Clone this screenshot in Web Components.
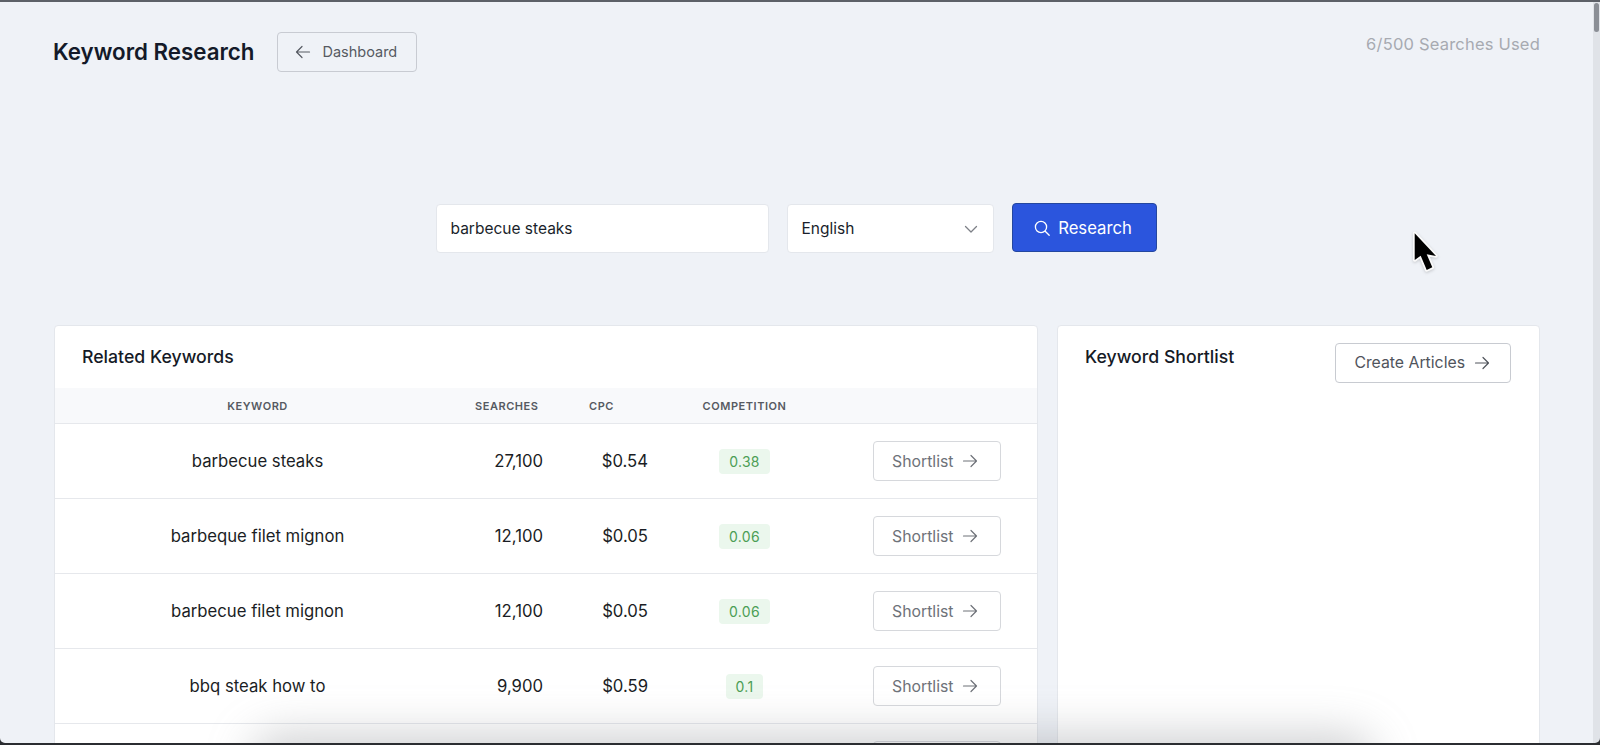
<!DOCTYPE html>
<html lang="en">
<head>
<meta charset="utf-8">
<title>Keyword Research</title>
<style>
  html, body { margin: 0; padding: 0; height: 745px; overflow: hidden; background: #eff2f7; }
  body { font-family: Inter, "Liberation Sans", sans-serif; }
</style>
</head>
<body>
<keyword-app></keyword-app>

<script>
const ARROW_RIGHT = `<svg viewBox="0 0 16 16" width="16" height="16" fill="none" stroke="currentColor" stroke-width="1.2" stroke-linecap="round" stroke-linejoin="round"><path d="M1.5 8h13M9 2.5 14.5 8 9 13.5"/></svg>`;
const ARROW_LEFT = `<svg viewBox="0 0 16 16" width="16" height="16" fill="none" stroke="currentColor" stroke-width="1.2" stroke-linecap="round" stroke-linejoin="round"><path d="M14.5 8h-13M7 2.5 1.5 8 7 13.5"/></svg>`;

/**
 * <outline-button> bordered button, icon goes before or after the label
 */
class OutlineButton extends HTMLElement {
  constructor() {
    super();
    this.attachShadow({ mode: 'open' });
  }

  connectedCallback() {
    const back = this.hasAttribute('back');
    this.shadowRoot.innerHTML = `
      <style>
        :host {
          display: inline-flex;
          align-items: center;
          box-sizing: border-box;
          height: var(--btn-h, 40px);
          width: var(--btn-w, auto);
          padding: 0 var(--btn-pad-r, 18px) 0 var(--btn-pad, 18px);
          gap: var(--btn-gap, 8px);
          border: 1px solid var(--btn-border, #d6d8dc);
          border-radius: 4px;
          background: var(--btn-bg, #fff);
          color: var(--btn-color, #6e7279);
          font-size: var(--btn-size, 15.8px);
          font-weight: 400;
          white-space: nowrap;
        }
        svg { display: block; flex: none; }
      </style>
      ${back ? ARROW_LEFT : ''}<slot></slot>${back ? '' : ARROW_RIGHT}
    `;
  }
}

/**
 * <page-header> title on the left, usage counter on the right
 */
class PageHeader extends HTMLElement {
  constructor() {
    super();
    this.attachShadow({ mode: 'open' });
    this.shadowRoot.innerHTML = `
      <style>
        :host { display: flex; justify-content: space-between; align-items: flex-start; }
        .left { display: flex; align-items: center; gap: 23px; margin-left: -1px; }
        h1 { margin: 0; font-size: 22.3px; font-weight: 600; color: #141a29; }
        outline-button {
          --btn-h: 40px; --btn-pad: 17px; --btn-pad-r: 19px; --btn-gap: 11px; --btn-bg: #eff2f7;
          --btn-border: #c8cbd2; --btn-color: #565a62; --btn-size: 14.5px;
        }
        .used { margin-top: 2px; font-size: 16.5px; line-height: 20px; color: #a7aab1; letter-spacing: .2px; }
      </style>
      <div class="left">
        <h1>Keyword Research</h1>
        <outline-button back>Dashboard</outline-button>
      </div>
      <div class="used">6/500 Searches Used</div>
    `;
  }
}

/**
 * <search-bar> keyword input, language select and submit button
 */
class SearchBar extends HTMLElement {
  constructor() {
    super();
    this.attachShadow({ mode: 'open' });
    this.shadowRoot.innerHTML = `
      <style>
        :host { display: flex; justify-content: center; align-items: center; gap: 18px; padding-right: 2px; }
        .field {
          display: flex; align-items: center; justify-content: space-between;
          box-sizing: border-box; height: 49px; margin-top: 2px; padding: 0 15px 0 14px;
          background: #fff; border: 1px solid #e4e7ec; border-radius: 4px;
          font-size: 15.5px; color: #1a1f2b;
        }
        .input { width: 333px; }
        .select { width: 207px; }
        .select svg { color: #7d8087; }
        .go {
          display: flex; align-items: center; justify-content: center; gap: 7px;
          box-sizing: border-box; width: 145px; height: 49px; padding-right: 3px;
          background: #2b55dd; border: 1px solid #24479f; border-radius: 4px;
          color: #fff; font-size: 16.7px;
        }
        svg { display: block; }
      </style>
      <div class="field input">barbecue steaks</div>
      <div class="field select">English
        <svg viewBox="0 0 14 14" width="14" height="14" fill="none" stroke="currentColor" stroke-width="1.3" stroke-linecap="round" stroke-linejoin="round"><path d="M1.5 4.5 7 10l5.5-5.5"/></svg>
      </div>
      <div class="go">
        <svg viewBox="0 0 18 18" width="18" height="18" fill="none" stroke="currentColor" stroke-width="1.3" stroke-linecap="round"><circle cx="8" cy="8" r="5.6"/><path d="m12.2 12.2 4 4"/></svg>
        Research
      </div>
    `;
  }
}

/**
 * <score-badge> pale green chip with the competition value
 */
class ScoreBadge extends HTMLElement {
  constructor() {
    super();
    this.attachShadow({ mode: 'open' });
    this.shadowRoot.innerHTML = `
      <style>
        :host {
          display: inline-flex; align-items: center; box-sizing: border-box;
          height: 25px; padding: 0 10px; border-radius: 4px;
          background: #ebf7ed; color: #4c9e55; font-size: 14px; letter-spacing: .3px;
        }
      </style>
      <slot></slot>
    `;
  }
}

/**
 * <keyword-row> one table row
 * @attr {string} keyword, searches, cpc, score
 * @attr {boolean} cut - last row, only the top of its button is in view
 */
class KeywordRow extends HTMLElement {
  constructor() {
    super();
    this.attachShadow({ mode: 'open' });
  }

  connectedCallback() {
    const a = (n) => this.getAttribute(n) || '';
    const score = a('score');
    const cut = this.hasAttribute('cut');
    this.shadowRoot.innerHTML = `
      <style>
        :host {
          display: grid;
          grid-template-columns: var(--kw-cols);
          align-items: center;
          box-sizing: border-box;
          height: 75px;
          border-bottom: 1px solid #e6e8ec;
          font-size: 16.7px;
          color: #1a1d24;
        }
        .kw { text-align: center; }
        .num { text-align: right; padding-right: 14px; }
        .score { text-align: center; }
        .act { display: flex; justify-content: flex-end; padding-right: 36px; }
        outline-button { --btn-w: 128px; --btn-pad: 18px; --btn-pad-r: 21px; --btn-gap: 9px; }
      </style>
      <div class="kw">${a('keyword')}</div>
      <div class="num">${a('searches')}</div>
      <div class="num">${a('cpc')}</div>
      <div class="score">${score ? `<score-badge>${score}</score-badge>` : ''}</div>
      <div class="act"><outline-button>${cut ? '' : 'Shortlist'}</outline-button></div>
    `;
  }
}

/**
 * <keyword-table> header strip plus the rows passed in as children
 */
class KeywordTable extends HTMLElement {
  constructor() {
    super();
    this.attachShadow({ mode: 'open' });
    this.shadowRoot.innerHTML = `
      <style>
        :host { display: block; --kw-cols: 405px 97px 105px 165px 1fr; }
        .head {
          display: grid;
          grid-template-columns: var(--kw-cols);
          align-items: center;
          box-sizing: border-box;
          height: 36px;
          background: #f8f9fb;
          border-bottom: 1px solid #e6e8ec;
          font-size: 11px;
          font-weight: 600;
          letter-spacing: .55px;
          color: #565a62;
        }
        .c { text-align: center; }
        .l { padding-left: 15px; }
        .p { padding-left: 32px; }
      </style>
      <div class="head">
        <div class="c">KEYWORD</div>
        <div class="l">SEARCHES</div>
        <div class="p">CPC</div>
        <div class="c">COMPETITION</div>
        <div></div>
      </div>
      <slot></slot>
    `;
  }
}

/**
 * <panel-card> white card with a title row, extra header content goes in slot="action"
 */
class PanelCard extends HTMLElement {
  constructor() {
    super();
    this.attachShadow({ mode: 'open' });
    this.shadowRoot.innerHTML = `
      <style>
        :host {
          display: block; box-sizing: border-box; height: 600px; overflow: hidden;
          background: #fff; border: 1px solid #e4e7ec; border-radius: 4px 4px 0 0;
        }
        .top { display: flex; justify-content: space-between; align-items: flex-start; height: 62px; padding: 16.5px 28px 0 27px; box-sizing: border-box; }
        h2 { margin: 2px 0 0; font-size: 17.7px; line-height: 24px; font-weight: 500; color: #151a26; }
        ::slotted([slot="action"]) { --btn-h: 40px; --btn-pad: 18px; --btn-pad-r: 20px; --btn-gap: 9px; --btn-border: #c8cbd1; --btn-color: #50545c; }
      </style>
      <div class="top">
        <h2>${this.getAttribute('heading') || ''}</h2>
        <slot name="action"></slot>
      </div>
      <slot></slot>
    `;
  }
}

/**
 * <keyword-app> page shell, also holds what the capture laid over the page
 * (scrollbar, pointer, blurred dock, window edge)
 */
class KeywordApp extends HTMLElement {
  constructor() {
    super();
    this.attachShadow({ mode: 'open' });
    this.shadowRoot.innerHTML = `
      <style>
        :host {
          display: block; position: relative; box-sizing: border-box;
          height: 745px; overflow: hidden; padding: 29.5px 60px 0 54px;
          border-top: 2px solid #5d6168;
        }
        search-bar { margin-top: 130.5px; }
        .cols { display: grid; grid-template-columns: 984px 483px; gap: 19px; margin-top: 72px; }
        .scroll { position: absolute; top: 0; right: 0; bottom: 0; width: 7px; background: #e0e3e8; }
        .scroll i { position: absolute; top: 1px; left: 1px; width: 5px; height: 29px; border-radius: 3px; background: #8b8f96; }
        .dock {
          position: absolute; left: 250px; width: 1125px; bottom: -48px; height: 60px;
          background: rgba(120,122,128,.34); filter: blur(22px); border-radius: 30px;
        }
        .frame {
          position: absolute; left: 0; right: 0; top: -12px; bottom: 2px;
          border-radius: 0 0 5px 5px; box-shadow: 0 0 0 6px #2b2d31;
        }
        .pointer { position: absolute; left: 1411px; top: 227px; filter: drop-shadow(0 1px 1.5px rgba(0,0,0,.18)); }
      </style>
      <page-header></page-header>
      <search-bar></search-bar>
      <div class="cols">
        <panel-card heading="Related Keywords">
          <keyword-table>
            <keyword-row keyword="barbecue steaks" searches="27,100" cpc="$0.54" score="0.38"></keyword-row>
            <keyword-row keyword="barbeque filet mignon" searches="12,100" cpc="$0.05" score="0.06"></keyword-row>
            <keyword-row keyword="barbecue filet mignon" searches="12,100" cpc="$0.05" score="0.06"></keyword-row>
            <keyword-row keyword="bbq steak how to" searches="9,900" cpc="$0.59" score="0.1"></keyword-row>
            <keyword-row cut></keyword-row>
          </keyword-table>
        </panel-card>
        <panel-card heading="Keyword Shortlist">
          <outline-button slot="action">Create Articles</outline-button>
        </panel-card>
      </div>
      <div class="dock"></div>
      <div class="scroll"><i></i></div>
      <div class="frame"></div>
      <svg class="pointer" width="32" height="48" viewBox="0 0 32 48">
        <path d="M3.700 4.300V31L9.700 26.700 15.700 41 21.300 38.300 15.700 25.300 25 27Z" fill="#000" stroke="#fafafa" stroke-width="3.500" stroke-linejoin="round" paint-order="stroke"/>
      </svg>
    `;
  }
}

customElements.define('outline-button', OutlineButton);
customElements.define('page-header', PageHeader);
customElements.define('search-bar', SearchBar);
customElements.define('score-badge', ScoreBadge);
customElements.define('keyword-row', KeywordRow);
customElements.define('keyword-table', KeywordTable);
customElements.define('panel-card', PanelCard);
customElements.define('keyword-app', KeywordApp);
</script>
</body>
</html>
